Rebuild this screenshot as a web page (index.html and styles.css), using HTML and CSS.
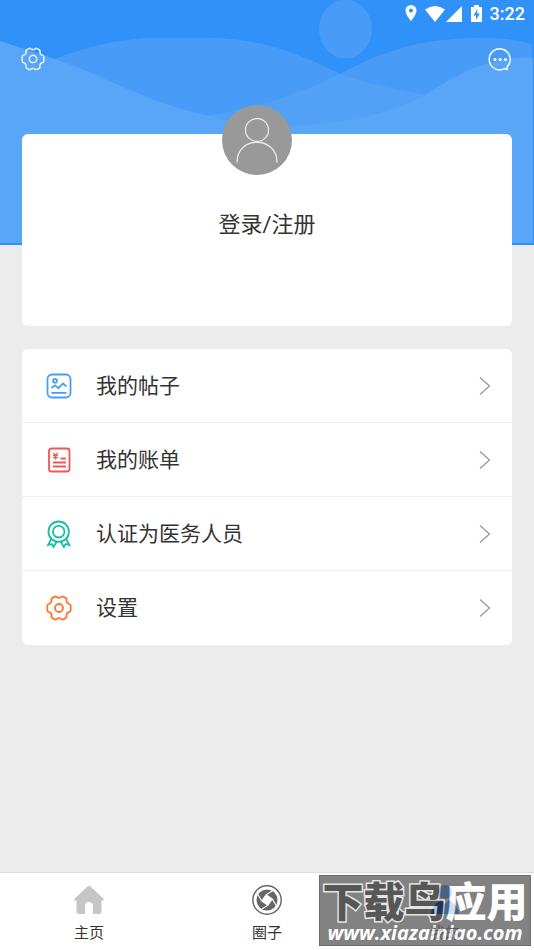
FILE: index.html
```html
<!DOCTYPE html>
<html lang="zh-CN">
<head>
<meta charset="utf-8">
<meta name="viewport" content="width=device-width, initial-scale=1">
<title>我的</title>
<link rel="stylesheet" href="styles.css">
</head>
<body>
<svg class="symbols" aria-hidden="true">
  <symbol id="gear" viewBox="0 0 26 26">
    <path d="M8.800 1.600Q9.800 1 10.500 1.800Q13 4 15.500 1.800Q16.200 1 17.200 1.600L19.900 3.100Q20.800 3.700 20.500 4.700Q20.200 8 22.900 8.800Q24.700 9.100 24.700 10.700V15.300Q24.700 16.900 22.900 17.200Q20.200 18 20.500 21.300Q20.800 22.300 19.900 22.900L17.200 24.400Q16.200 25 15.500 24.200Q13 22 10.500 24.200Q9.800 25 8.800 24.400L6.100 22.900Q5.200 22.300 5.500 21.300Q5.800 18 3.100 17.200Q1.300 16.900 1.300 15.300V10.700Q1.300 9.100 3.100 8.800Q5.800 8 5.500 4.700Q5.200 3.700 6.100 3.100Z"/>
    <circle cx="13" cy="13" r="4"/>
  </symbol>
  <symbol id="chevron" viewBox="0 0 12 20">
    <path d="M1 1.500L10.500 10L1 18.500"/>
  </symbol>
</svg>

<header class="hero">
  <svg class="waves" viewBox="0 0 534 245" preserveAspectRatio="none" aria-hidden="true">
    <rect width="534" height="245" fill="#3091f8"/>
    <ellipse cx="345.5" cy="29" rx="26.5" ry="29.5" fill="#489cf7"/>
    <path fill="#489cf7" d="M0 59H55C90 46 120 38 160 38H210C260 38 300 54 340 74C370 85 400 90 425 95L532 243H0Z"/>
    <path fill="#489cf7" d="M205 116C260 108 300 93 340 74C380 52 420 38 480 38C505 38 520 40 532 45V243H205Z"/>
    <path fill="#52a1f7" d="M205 116C260 108 300 93 340 74C370 85 400 90 425 95V243H205Z"/>
    <path fill="#59a5f8" d="M0 41L18 47L55 59C100 74 150 104 210 116C240 125 270 127 290 126C350 123 390 113 425 95C455 77 485 56 533 58V243H0Z"/>
  </svg>
  <div class="statusbar">
    <svg class="pin" viewBox="0 0 12 17"><path fill-rule="evenodd" d="M6 0a5.500 5.500 0 0 0-5.500 5.500C.5 9.700 6 16 6 16s5.500-6.300 5.500-10.500A5.500 5.500 0 0 0 6 0zm0 3.500a2 2 0 1 1 0 4 2 2 0 0 1 0-4z"/></svg>
    <svg class="wifi" viewBox="0 0 20 16"><path d="M0 3.500Q10-3.500 20 3.500L10 16Z"/></svg>
    <svg class="signal" viewBox="0 0 16 16"><path d="M16 0V16H0Z"/></svg>
    <svg class="battery" viewBox="0 0 11 17"><path fill-rule="evenodd" d="M3 0h5v2h3v15H0V2h3zM6.500 4L2.500 10.500H5V15L8.800 8.500H6.200Z"/></svg>
    <time class="clock">3:22</time>
  </div>
  <div class="toolbar">
    <button class="tool" type="button" aria-label="设置"><svg viewBox="0 0 26 26"><use href="#gear"/></svg></button>
    <button class="tool" type="button" aria-label="消息">
      <svg viewBox="0 0 24 24"><path d="M19.200 19.700A10.500 10.500 0 1 0 16.500 21.700L19.200 22.400Z"/><g class="dots"><circle cx="7" cy="12.500" r="1.600"/><circle cx="12.200" cy="12.500" r="1.600"/><circle cx="17.400" cy="12.500" r="1.600"/></g></svg>
    </button>
  </div>
</header>

<main class="content">
  <section class="card login">
    <svg class="avatar" viewBox="0 0 70 70" aria-hidden="true"><circle class="disc" cx="35" cy="35" r="35"/><circle cx="35" cy="25" r="11.500"/><path d="M15 57.500C15 30.500 55 30.500 55 57.500"/></svg>
    <a class="login-link" href="#">登录/注册</a>
  </section>

  <nav class="card menu" aria-label="功能">
    <a class="row" href="#">
      <svg class="icon blue" viewBox="0 0 26 26"><rect x="1.500" y="1.500" width="23" height="23" rx="4.500"/><circle cx="9" cy="7.700" r="1.900"/><path d="M5.500 15L9 12.300L12.500 15.200L17 10.500L20.500 13.500M5.500 19.800H20.500"/></svg>
      <span class="label">我的帖子</span>
      <svg class="arrow"><use href="#chevron"/></svg>
    </a>
    <a class="row" href="#">
      <svg class="icon red" viewBox="0 0 26 26"><rect x="3" y="1.500" width="20.500" height="23" rx="2.500"/><path d="M14.500 11.500H20M7 15.500H20M7 19.500H20"/><path class="fine" d="M7.300 6L9.500 8.500L11.700 6M9.500 8.500V12.500M7 8.700H12M7 10.700H12"/></svg>
      <span class="label">我的账单</span>
      <svg class="arrow"><use href="#chevron"/></svg>
    </a>
    <a class="row" href="#">
      <svg class="icon green" viewBox="0 0 26 26"><circle cx="12.700" cy="10.700" r="10.200"/><circle cx="12.700" cy="10.700" r="5.800"/><path d="M5.200 18L2 24L5.800 23L7.500 26L10.800 20.500M20.200 18L23.400 24L19.600 23L17.900 26L14.600 20.500"/></svg>
      <span class="label">认证为医务人员</span>
      <svg class="arrow"><use href="#chevron"/></svg>
    </a>
    <a class="row" href="#">
      <svg class="icon orange" viewBox="0 0 26 26"><use href="#gear"/></svg>
      <span class="label">设置</span>
      <svg class="arrow"><use href="#chevron"/></svg>
    </a>
  </nav>
</main>

<footer class="bottom">
  <nav class="tabs" aria-label="主导航">
    <a class="tab" href="#">
      <svg viewBox="0 0 30 30"><path fill="#c6c6c6" d="M13.700 1.300Q15 .2 16.300 1.300L29.500 13.700Q30.500 15.500 28.500 15.600H27.500V27Q27.500 29 25.500 29H19V20.500Q18.700 17 15 17Q11.300 17 11 20.500V29H4.500Q2.500 29 2.500 27V15.600H1.500Q-.5 15.500 .5 13.700Z"/></svg>
      <span>主页</span>
    </a>
    <a class="tab" href="#">
      <svg viewBox="0 0 30 30"><circle cx="15" cy="15" r="14.200" fill="none" stroke="#666" stroke-width="1.400"/><circle cx="15" cy="15" r="10.500" fill="#666"/><path fill="#fff" d="M14 9.800L20.200 14L16 20.200L9.800 16Z"/><path fill="none" stroke="#fff" stroke-width="1.100" d="M9.800 16L14 9.800L20.200 6M14 9.800L20.200 14L24 20.200M20.200 14L16 20.200L9.800 24M16 20.200L9.800 16L6 9.800"/></svg>
      <span>圈子</span>
    </a>
    <a class="tab" href="#">
      <svg viewBox="0 0 30 30"><circle cx="15" cy="7" r="7" fill="#0070f0"/><path fill="#0070f0" d="M1 29Q2 20 11 15L15 19L19 15Q28 20 29 29Z"/></svg>
      <span>我的</span>
    </a>
  </nav>
  <div class="watermark">
    <div class="mark-name"><span class="mark-dark">下载鸟</span><span>应用</span></div>
    <div class="mark-url">www.xiazainiao.com</div>
  </div>
</footer>
</body>
</html>
```

FILE: styles.css
```css
* {
  box-sizing: border-box;
}

body {
  display: flex;
  flex-direction: column;
  min-height: 100vh;
  margin: 0;
  background: #ececec;
  color: #333;
  font-family: Roboto, "Noto Sans CJK SC", sans-serif;
}

a {
  color: inherit;
  text-decoration: none;
}

svg {
  display: block;
  flex: none;
}

.symbols {
  position: absolute;
  width: 0;
  height: 0;
}

.hero {
  position: relative;
  padding-bottom: 172px;
}

.waves {
  position: absolute;
  inset: 0;
  z-index: -1;
  width: 100%;
  height: 100%;
}

.statusbar {
  display: flex;
  align-items: center;
  justify-content: flex-end;
  height: 27px;
  padding-right: 9px;
  color: #fff;
  fill: #fff;
}

.pin {
  width: 12px;
  height: 17px;
  margin-right: 8px;
}

.wifi {
  width: 20px;
  height: 16px;
  margin-right: 1px;
}

.signal {
  width: 16px;
  height: 16px;
  margin-right: 9px;
}

.battery {
  width: 11px;
  height: 17px;
  margin-right: 8px;
}

.clock {
  font-size: 18px;
  font-weight: 500;
  line-height: 28px;
}

.toolbar {
  display: flex;
  justify-content: space-between;
  padding: 20px 22px 2px 21px;
}

.tool {
  width: 24px;
  height: 24px;
  padding: 0;
  border: 0;
  background: none;
}

.tool svg {
  width: 24px;
  height: 24px;
  fill: none;
  stroke: #fff;
  stroke-width: 1.4;
}

.tool .dots {
  fill: #fff;
  stroke: none;
}

.content {
  position: relative;
  flex: 1;
  margin-top: -111px;
  padding: 0 22px 22px;
}

.card {
  border-radius: 6px;
  background: #fff;
}

.login {
  display: flex;
  flex-direction: column;
  align-items: center;
  height: 192px;
  margin-bottom: 23px;
}

.avatar {
  width: 70px;
  height: 70px;
  margin: -29px 21px 34px 0;
  fill: none;
  stroke: #e8e8e8;
  stroke-width: 1.3;
}

.avatar .disc {
  fill: #999;
  stroke: none;
}

.login-link {
  font-size: 22px;
  line-height: 32px;
}

.row {
  display: flex;
  align-items: center;
  height: 74px;
  padding: 0 21px 0 24px;
}

.row:not(:last-child) {
  border-bottom: 1px solid #f0f0f0;
}

.icon {
  width: 26px;
  height: 26px;
  margin-right: 24px;
  overflow: visible;
  fill: none;
  stroke-width: 1.8;
}

.fine {
  stroke-width: 1.2;
}

.blue {
  stroke: #489ef5;
}

.red {
  stroke: #f25555;
}

.green {
  stroke: #16bea0;
}

.orange {
  stroke: #fa7832;
}

.label {
  flex: 1;
  font-size: 21px;
  line-height: 30px;
}

.arrow {
  width: 12px;
  height: 20px;
  fill: none;
  stroke: #999;
  stroke-width: 1.3;
}

.bottom {
  position: relative;
  border-top: 1px solid #dcdcdc;
  background: #fff;
}

.tabs {
  display: grid;
  grid-template-columns: repeat(3, 1fr);
}

.tab {
  display: flex;
  flex-direction: column;
  gap: 7px;
  align-items: center;
  padding: 12px 0 6px;
  font-size: 15px;
  line-height: 22px;
}

.tab svg {
  width: 30px;
  height: 30px;
}

.watermark {
  position: absolute;
  right: 3px;
  bottom: 4px;
  width: 212px;
  height: 71px;
  border: 1px solid #444;
  background: #606060;
  color: #fff;
  opacity: 0.78;
  text-align: center;
  white-space: nowrap;
}

.mark-name {
  font-size: 41px;
  font-weight: 900;
  line-height: 54px;
}

.mark-dark {
  color: #282828;
  -webkit-text-stroke: 3px #ddd;
  paint-order: stroke fill;
}

.mark-url {
  margin-top: -9px;
  font-family: "Open Sans", sans-serif;
  font-size: 20px;
  font-style: italic;
  font-weight: 700;
  line-height: 24px;
}
```
